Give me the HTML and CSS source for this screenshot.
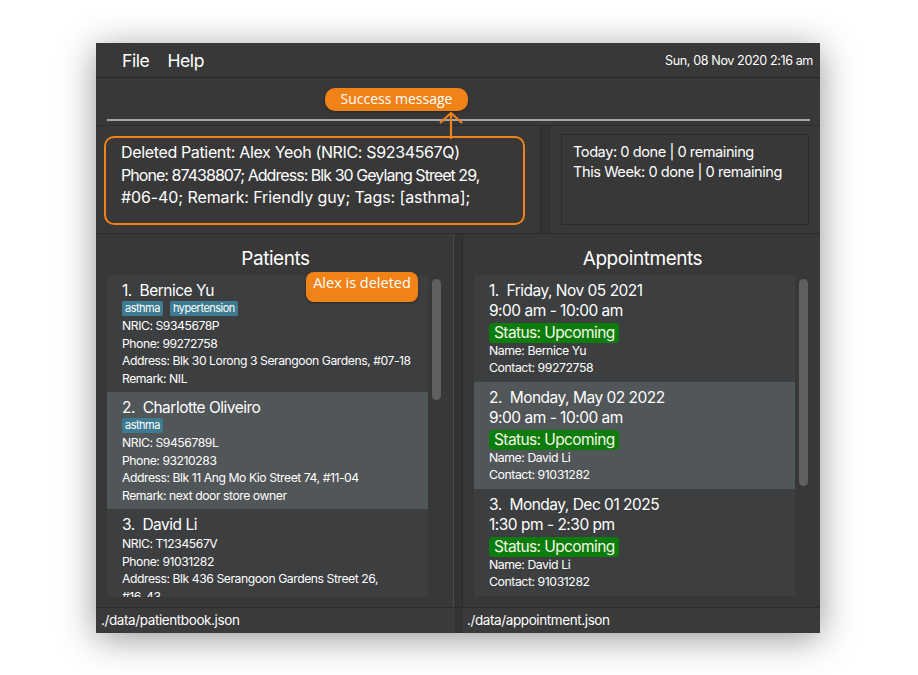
FILE: index.html
```html
<!DOCTYPE html>
<html>
<head>
<meta charset="utf-8">
<link rel="stylesheet" href="styles.css">
</head>
<body>
<div class="window">
  <header class="menubar">
    <nav class="menus"><span>File</span><span>Help</span></nav>
    <span class="clock">Sun, 08 Nov 2020 2:16 am</span>
  </header>

  <div class="command">
    <div class="cmd-field"></div>
  </div>

  <div class="result-row">
    <div class="result-pane">
      <div class="result-box">
        <p>Deleted Patient: Alex Yeoh (NRIC: S9234567Q)</p>
        <p class="tight">Phone: 87438807; Address: Blk 30 Geylang Street 29,</p>
        <p class="loose">#06-40; Remark: Friendly guy; Tags: [asthma];</p>
      </div>
    </div>
    <div class="vdivider"></div>
    <div class="stats-pane">
      <div class="stats-box">
        <p>Today: 0 done | 0 remaining</p>
        <p>This Week: 0 done | 0 remaining</p>
      </div>
    </div>
  </div>

  <div class="lists">
    <section class="panel">
      <h2 class="panel-title">Patients</h2>
      <div class="list-wrap">
        <div class="list">
          <article class="card even">
            <div class="name">1.  Bernice Yu</div>
            <div class="tags"><span class="tag">asthma</span><span class="tag">hypertension</span></div>
            <div class="detail">NRIC: S9345678P</div>
            <div class="detail">Phone: 99272758</div>
            <div class="detail">Address: Blk 30 Lorong 3 Serangoon Gardens, #07-18</div>
            <div class="detail">Remark: NIL</div>
          </article>
          <article class="card odd">
            <div class="name">2.  Charlotte Oliveiro</div>
            <div class="tags"><span class="tag">asthma</span></div>
            <div class="detail">NRIC: S9456789L</div>
            <div class="detail">Phone: 93210283</div>
            <div class="detail">Address: Blk 11 Ang Mo Kio Street 74, #11-04</div>
            <div class="detail">Remark: next door store owner</div>
          </article>
          <article class="card even">
            <div class="name">3.  David Li</div>
            <div class="detail">NRIC: T1234567V</div>
            <div class="detail">Phone: 91031282</div>
            <div class="detail">Address: Blk 436 Serangoon Gardens Street 26,</div>
            <div class="detail">#16-43</div>
          </article>
        </div>
        <div class="scrollbar"><div class="thumb thumb-patients"></div></div>
      </div>
    </section>

    <div class="split-divider"></div>

    <section class="panel">
      <h2 class="panel-title">Appointments</h2>
      <div class="list-wrap">
        <div class="list">
          <article class="card even appt">
            <div class="name">1.  Friday, Nov 05 2021</div>
            <div class="time">9:00 am - 10:00 am</div>
            <div class="status-row"><span class="status">Status: Upcoming</span></div>
            <div class="adetail">Name: Bernice Yu</div>
            <div class="adetail">Contact: 99272758</div>
          </article>
          <article class="card odd appt">
            <div class="name">2.  Monday, May 02 2022</div>
            <div class="time">9:00 am - 10:00 am</div>
            <div class="status-row"><span class="status">Status: Upcoming</span></div>
            <div class="adetail">Name: David Li</div>
            <div class="adetail">Contact: 91031282</div>
          </article>
          <article class="card even appt">
            <div class="name">3.  Monday, Dec 01 2025</div>
            <div class="time">1:30 pm - 2:30 pm</div>
            <div class="status-row"><span class="status">Status: Upcoming</span></div>
            <div class="adetail">Name: David Li</div>
            <div class="adetail">Contact: 91031282</div>
          </article>
        </div>
        <div class="scrollbar"><div class="thumb thumb-appts"></div></div>
      </div>
    </section>
  </div>

  <footer class="statusbar">
    <div class="status-cell left">./data/patientbook.json</div>
    <div class="status-gap"></div>
    <div class="status-cell right">./data/appointment.json</div>
  </footer>

  <div class="note note-success">Success message</div>
  <svg class="arrow" width="26" height="28" viewBox="0 0 26 28">
    <path d="M13 2 V28 M2 12 L13 2 L24 12" fill="none" stroke="#f08218" stroke-width="2.2" stroke-linejoin="round"/>
  </svg>
  <div class="note note-deleted">Alex is deleted</div>
</div>
</body>
</html>
```

FILE: styles.css
```css
* { box-sizing: border-box; }
html, body { margin: 0; padding: 0; }
body {
  background: #ffffff;
  width: 918px;
  height: 675px;
  overflow: hidden;
  font-family: Inter, "Liberation Sans", sans-serif;
  color: #ffffff;
}
p { margin: 0; }

.window {
  position: relative;
  margin: 43px 0 0 96px;
  width: 724px;
  height: 589px;
  background: #383838;
  box-shadow: 0 6px 34px rgba(0, 0, 0, 0.42);
  display: flex;
  flex-direction: column;
}

.menubar {
  flex: none;
  height: 35px;
  border-bottom: 1px solid #262626;
  display: flex;
  align-items: center;
  justify-content: space-between;
  padding: 0 7px 0 26px;
}
.menus { display: flex; gap: 18px; font-size: 17.5px; letter-spacing: -0.4px; }
.clock { font-size: 12.6px; letter-spacing: -0.4px; }

.command {
  flex: none;
  height: 48px;
  padding: 41px 10px 0 11px;
  border-bottom: 1px solid #2c2c2c;
}
.cmd-field { height: 2px; background: #a6a6a6; }

.result-row {
  flex: none;
  height: 107px;
  display: flex;
}
.result-pane {
  width: 444px;
  padding: 10px 15px 7px 8px;
}
.result-box {
  height: 89px;
  border: 2px solid #f08218;
  border-radius: 10px;
  padding: 3px 15px;
  font-size: 16px;
  line-height: 22.7px;
  letter-spacing: -0.35px;
}
.result-box .tight { letter-spacing: -0.95px; }
.result-box .loose { letter-spacing: -0.1px; }
.vdivider {
  width: 10px;
  background: #333333;
  border-left: 1px solid #2a2a2a;
  border-right: 1px solid #2a2a2a;
}
.stats-pane {
  flex: 1;
  padding: 8px 11px 8px 11px;
}
.stats-box {
  height: 91px;
  border: 1px solid #2b2b2b;
  padding: 7px 11px;
  font-size: 14.6px;
  line-height: 20px;
  letter-spacing: -0.45px;
}

.lists {
  flex: none;
  height: 374px;
  display: flex;
  border-top: 1px solid #2c2c2c;
}
.panel {
  width: 357px;
  display: flex;
  flex-direction: column;
  padding: 0 9px 10px 11px;
}
.panel-title {
  margin: 0;
  height: 41px;
  padding-top: 13px;
  text-align: center;
  font-weight: normal;
  font-size: 19px;
  line-height: 24px;
  letter-spacing: -0.45px;
}
.split-divider {
  width: 10px;
  background: #333333;
  border-left: 1px solid #4a4a4a;
  border-right: 1px solid #2a2a2a;
}

.list-wrap {
  flex: 1;
  display: flex;
  min-height: 0;
}
.list {
  width: 321px;
  overflow: hidden;
  background: #383838;
}
.scrollbar {
  flex: 1;
  padding: 4px 3px 0 4px;
}
.thumb {
  width: 9px;
  background: #606060;
  border-radius: 5px;
}
.thumb-patients { height: 121px; }
.thumb-appts { height: 207px; }

.card {
  padding: 6px 15px 5px 15px;
}
.card.even { background: #3c3e3f; }
.card.odd { background: #515658; }
.name {
  font-size: 15.5px;
  line-height: 20px;
  white-space: pre;
  letter-spacing: -0.5px;
}
.tags {
  display: flex;
  gap: 7px;
  height: 16px;
  align-items: flex-start;
}
.tag {
  background: #3e7b91;
  font-size: 11px;
  line-height: 15px;
  height: 15px;
  padding: 0 3px;
  border-radius: 2px;
  letter-spacing: -0.5px;
}
.detail {
  font-size: 12.2px;
  line-height: 17.5px;
  letter-spacing: -0.45px;
  white-space: nowrap;
}

.card.appt { padding: 6px 15px 6px 15px; }
.time {
  font-size: 15.5px;
  line-height: 20px;
  letter-spacing: -0.5px;
}
.status-row { height: 21px; padding-top: 1px; }
.status {
  display: inline-block;
  background: #0c7c0c;
  color: #f4f8e4;
  font-size: 15.5px;
  line-height: 20px;
  height: 20px;
  padding: 0 4px 0 5px;
  border-radius: 4px;
  letter-spacing: -0.6px;
}
.adetail {
  font-size: 12.3px;
  line-height: 17px;
  letter-spacing: -0.45px;
}

.statusbar {
  flex: 1;
  display: flex;
  border-top: 1px solid #2c2c2c;
  background: #3a3a3a;
}
.status-cell {
  font-size: 13.5px;
  line-height: 25px;
  letter-spacing: -0.4px;
}
.status-cell.left { width: 359px; padding-left: 5px; }
.status-gap { width: 8px; background: #333333; }
.status-cell.right { flex: 1; padding-left: 4px; }

.note {
  position: absolute;
  background: #f08218;
  color: #ffffff;
  font-family: "Open Sans", "DejaVu Sans", sans-serif;
  box-shadow: 0 1px 3px rgba(0, 0, 0, 0.35);
}
.note-success {
  left: 229px;
  top: 45px;
  width: 143px;
  height: 23px;
  border-radius: 10px;
  font-size: 14px;
  line-height: 22px;
  text-align: center;
}
.note-deleted {
  left: 210px;
  top: 229px;
  width: 112px;
  height: 30px;
  border-radius: 8px;
  font-size: 14.5px;
  line-height: 22px;
  text-align: center;
}
.arrow {
  position: absolute;
  left: 342px;
  top: 68px;
}
```
